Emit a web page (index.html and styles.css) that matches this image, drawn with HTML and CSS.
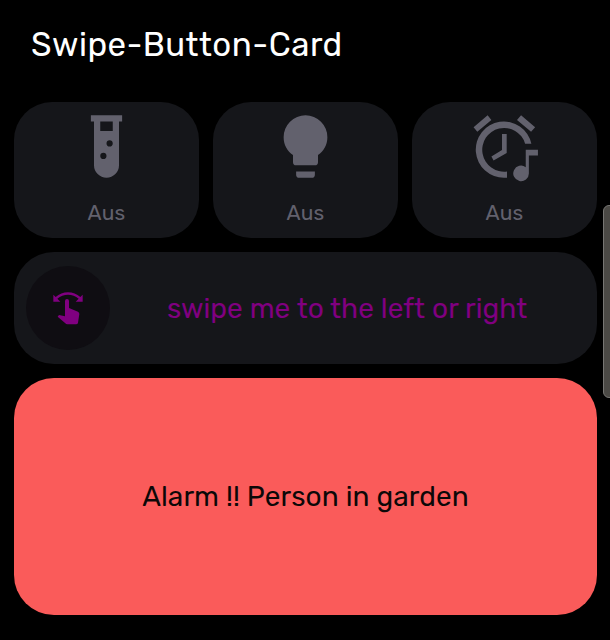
FILE: index.html
```html
<!DOCTYPE html>
<html lang="de">
<head>
<meta charset="utf-8">
<title>Swipe-Button-Card</title>
<link rel="stylesheet" href="styles.css">
</head>
<body>
<main class="dashboard">
  <h1 class="title"><span>Swipe-Button-Card</span></h1>
  <div class="stack">
    <div class="buttons">
      <button class="tile">
        <svg class="icon" viewBox="0 0 24 24"><path d="M7,2V4H8V18A4,4 0 0,0 12,22A4,4 0 0,0 16,18V4H17V2H7M11,16C10.4,16 10,15.6 10,15C10,14.4 10.4,14 11,14C11.6,14 12,14.4 12,15C12,15.6 11.6,16 11,16M13,12C12.4,12 12,11.6 12,11C12,10.4 12.4,10 13,10C13.6,10 14,10.4 14,11C14,11.6 13.6,12 13,12M14,7H10V4H14V7Z"/></svg>
        <span class="state">Aus</span>
      </button>
      <button class="tile">
        <svg class="icon" viewBox="0 0 24 24"><path d="M12,2A7,7 0 0,0 5,9C5,11.38 6.19,13.47 8,14.74V17A1,1 0 0,0 9,18H15A1,1 0 0,0 16,17V14.74C17.81,13.47 19,11.38 19,9A7,7 0 0,0 12,2M9,21A1,1 0 0,0 10,22H14A1,1 0 0,0 15,21V20H9V21Z"/></svg>
        <span class="state">Aus</span>
      </button>
      <button class="tile">
        <svg class="icon" viewBox="0 0 24 24"><path d="M2.1,5.8L6.6,2L7.8,3.5L3.3,7.3ZM17.3,2L21.8,5.8L20.5,7.3L16,3.5ZM11.2,8H12.7V14.1L8.5,16.5L7.8,15.2L11.2,13.1ZM12.8,22C12.5,22 12.3,22 12,22A9,9 0 1,1 20.6,11.1H18.6A7,7 0 1,0 12.8,20ZM18.8,13H22.7V14.9H19.8V20.6A2.5,2.5 0 1,1 18.8,18.6Z"/></svg>
        <span class="state">Aus</span>
      </button>
    </div>
    <div class="swipe">
      <div class="knob">
        <svg class="gesture" viewBox="139 137 132 132"><path d="M161,163L168,170Q184,156 205,156Q226,156 242,170L249,163V184H228L237,175Q223,163 205,163Q187,163 173,175L182,184H161ZM196,182Q196,176 202,176Q208,176 208,182V203L235,214Q239,216 239,221L235,247Q234,252 229,252H203Q199,252 197,249L174,229L178,224L196,228Z"/></svg>
      </div>
      <div class="message"><span>swipe me to the left or right</span></div>
    </div>
    <div class="alarm"><span>Alarm !! Person in garden</span></div>
  </div>
  <div class="scrollbar"></div>
</main>
</body>
</html>
```
FILE: styles.css
```css
* { box-sizing: border-box; }
body {
  margin: 0;
  background: #000;
  font-family: Rubik, Roboto, sans-serif;
}
.dashboard {
  position: relative;
  height: 640px;
  padding: 0 13px 0 14px;
  overflow: hidden;
}
.title {
  margin: 0;
  height: 102px;
  padding: 25px 0 0 17px;
  font-size: 33px;
  line-height: 40px;
  font-weight: 400;
  letter-spacing: 0.48px;
  color: #fff;
  white-space: nowrap;
}
.stack { display: flex; flex-direction: column; gap: 14px; }
.buttons { display: grid; grid-template-columns: repeat(3, 1fr); gap: 14px; }
.tile {
  display: flex;
  flex-direction: column;
  align-items: center;
  height: 136px;
  margin: 0;
  padding: 7px 0 0;
  border: 0;
  border-radius: 38px;
  background: #15161a;
  color: #62616d;
  font: inherit;
}
.icon { width: 75px; height: 75px; fill: currentColor; }
.state {
  margin-top: 17px;
  font-size: 21px;
  line-height: 24px;
  letter-spacing: 0.2px;
}
.swipe {
  display: flex;
  align-items: center;
  height: 112px;
  padding-left: 12px;
  border-radius: 40px;
  background: #15161a;
  color: #800080;
}
.knob {
  display: flex;
  align-items: center;
  justify-content: center;
  width: 84px;
  height: 84px;
  border-radius: 50%;
  background: #0f0d12;
}
.gesture { width: 44px; height: 44px; fill: currentColor; }
.message {
  flex: 1;
  padding-left: 57px;
  font-size: 28px;
  letter-spacing: 0.05px;
  white-space: nowrap;
}
.alarm {
  display: flex;
  align-items: center;
  justify-content: center;
  height: 237px;
  border-radius: 40px;
  background: #fa5b5a;
  color: #0c0808;
  font-size: 28px;
  letter-spacing: 0.08px;
  white-space: nowrap;
}
.scrollbar {
  position: absolute;
  top: 205px;
  right: -6px;
  width: 13px;
  height: 193px;
  border: 1px solid #777673;
  border-radius: 6px;
  background: #4b4945;
}
```
